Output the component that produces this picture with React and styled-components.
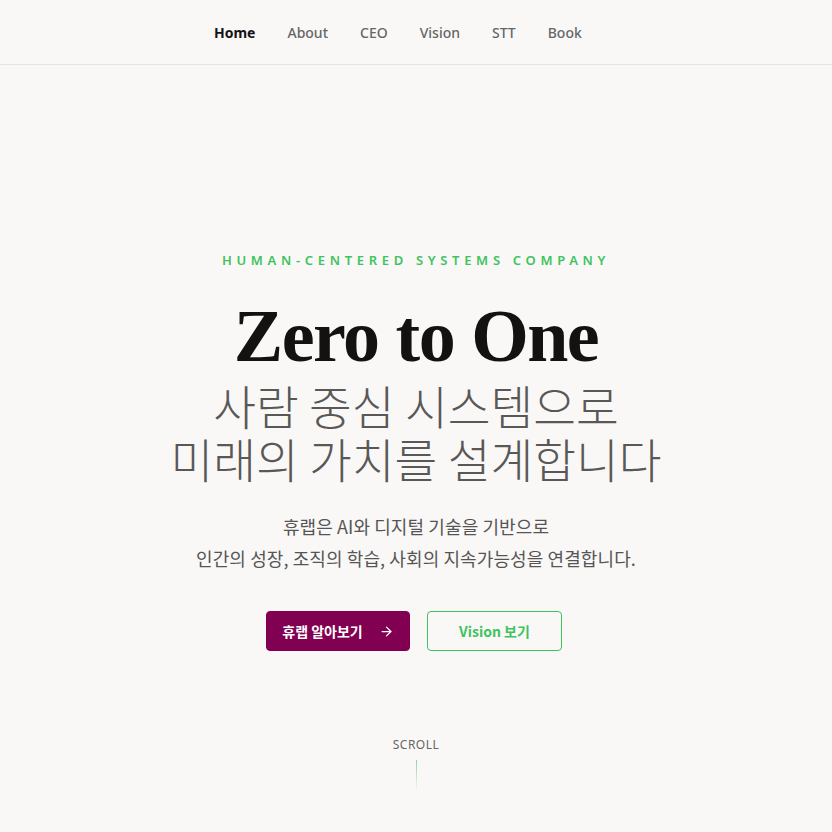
import React from 'react';
import styled, { createGlobalStyle } from 'styled-components';
import { ArrowRight } from 'lucide-react';

const GlobalStyle = createGlobalStyle`
  * { box-sizing: border-box; }
  html, body { margin: 0; padding: 0; }
  body {
    background: #f9f8f7;
    font-family: "Noto Sans", "Noto Sans CJK KR", sans-serif;
    color: #222;
  }
`;

const Header = styled.header`
  height: 65px;
  border-bottom: 1px solid #e6e4e2;
  display: flex;
  align-items: center;
  padding-left: 214px;
`;

const NavList = styled.nav`
  display: flex;
  align-items: center;
  gap: 32px;
`;

const NavLink = styled.a`
  font-size: 14px;
  font-weight: ${(p) => (p.$active ? 700 : 500)};
  color: ${(p) => (p.$active ? '#141414' : '#666')};
  text-decoration: none;
  cursor: pointer;
`;

const Hero = styled.section`
  display: flex;
  flex-direction: column;
  align-items: center;
  text-align: center;
  padding-top: 185px;
`;

const Tagline = styled.p`
  margin: 0;
  font-size: 13px;
  line-height: 20px;
  font-weight: 600;
  letter-spacing: 0.36em;
  color: #3ec35e;
`;

const Title = styled.h1`
  margin: 24px 0 0;
  font-family: "Liberation Serif", serif;
  font-size: 74px;
  line-height: 84px;
  font-weight: 700;
  letter-spacing: -1.5px;
  color: #141210;
`;

const Subtitle = styled.h2`
  margin: 0;
  font-family: "Noto Sans CJK KR", sans-serif;
  font-size: 46.5px;
  line-height: 53px;
  font-weight: 300;
  letter-spacing: 0;
  color: #5a5857;
`;

const Lead = styled.p`
  margin: 26px 0 0;
  font-family: "Noto Sans CJK KR", sans-serif;
  font-size: 18px;
  line-height: 32px;
  font-weight: 400;
  letter-spacing: 0.1px;
  color: #555;
`;

const Actions = styled.div`
  margin-top: 37px;
  margin-right: 4px;
  display: flex;
  gap: 17px;
`;

const Button = styled.a`
  height: 40px;
  display: inline-flex;
  align-items: center;
  justify-content: center;
  gap: 16px;
  border-radius: 4px;
  font-family: "Noto Sans CJK KR", sans-serif;
  font-size: 14px;
  font-weight: 700;
  text-decoration: none;
  cursor: pointer;
  width: ${(p) => p.$width}px;
  background: ${(p) => (p.$primary ? '#820052' : 'transparent')};
  color: ${(p) => (p.$primary ? '#fff' : '#3ec35e')};
  border: 1px solid ${(p) => (p.$primary ? '#820052' : '#3ec35e')};
`;

const Scroll = styled.div`
  margin-top: 86px;
  display: flex;
  flex-direction: column;
  align-items: center;
  gap: 7px;
`;

const ScrollLabel = styled.span`
  font-size: 12px;
  line-height: 16px;
  letter-spacing: 0.5px;
  color: #666;
`;

const ScrollLine = styled.span`
  width: 1px;
  height: 32px;
  background: linear-gradient(to bottom, #8fd4a3, rgba(143, 212, 163, 0));
`;

const links = ['Home', 'About', 'CEO', 'Vision', 'STT', 'Book'];

export default function App() {
  return (
    <>
      <GlobalStyle />
      <Header>
        <NavList>
          {links.map((l) => (
            <NavLink key={l} $active={l === 'Home'}>{l}</NavLink>
          ))}
        </NavList>
      </Header>
      <Hero>
        <Tagline>HUMAN-CENTERED SYSTEMS COMPANY</Tagline>
        <Title>Zero to One</Title>
        <Subtitle>
          사람 중심 시스템으로
          <br />
          미래의 가치를 설계합니다
        </Subtitle>
        <Lead>
          휴랩은 AI와 디지털 기술을 기반으로
          <br />
          인간의 성장, 조직의 학습, 사회의 지속가능성을 연결합니다.
        </Lead>
        <Actions>
          <Button $primary $width={144}>
            휴랩 알아보기 <ArrowRight size={15} strokeWidth={2} />
          </Button>
          <Button $width={135}>Vision 보기</Button>
        </Actions>
        <Scroll>
          <ScrollLabel>SCROLL</ScrollLabel>
          <ScrollLine />
        </Scroll>
      </Hero>
    </>
  );
}
